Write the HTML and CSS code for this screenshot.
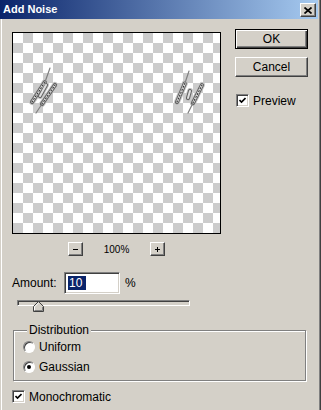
FILE: index.html
```html
<!DOCTYPE html>
<html lang="en">
<head>
    <meta charset="UTF-8">
    <title>Add Noise</title>
    <link rel="stylesheet" href="styles.css">
</head>
<body>
    <div class="window">
        <div class="titlebar">
            <span class="title">Add Noise</span>
            <span class="close">
                <svg width="8" height="7" viewBox="0 0 8 7"><path d="M0.5 0.5L7.5 6.5M7.5 0.5L0.5 6.5" stroke="#000" stroke-width="1.7"/></svg>
            </span>
        </div>
        <div class="content">
            <div class="top">
                <div class="preview-col">
                    <div class="preview">
                        <!-- noise specks left on the transparent layer -->
                        <svg width="207" height="200" viewBox="0 0 207 200">
                            <g fill="none" stroke-linecap="round">
                                <path d="M19 69L32 49M27 63L33 52M29 71L42 52M164 69L172 50M175 65L177 58M180 70L189 52" stroke="#c8c8c8" stroke-width="6"/>
                                <path d="M19 69L32 49M27 63L33 52M29 71L42 52M164 69L172 50M175 65L177 58M180 70L189 52" stroke="#666" stroke-width="4.2" stroke-dasharray="2.5 1"/>
                                <path d="M19 69L32 49M27 63L33 52M29 71L42 52M164 69L172 50M175 65L177 58M180 70L189 52" stroke="#e0e0e0" stroke-width="2"/>
                                <path d="M19 69L32 49M29 71L42 52M164 69L172 50M180 70L189 52" stroke="#333" stroke-width="1.1" stroke-dasharray="1 2.2"/>
                                <path d="M32 49L37 35M23 80L29 71M172 50L176 38M175 80L180 70" stroke="#808080" stroke-width="1.2"/>
                            </g>
                        </svg>
                    </div>
                    <div class="zoom-row">
                        <span class="small-btn"><svg width="5" height="5" viewBox="0 0 5 5"><path d="M0 2.5H5" stroke="#000"/></svg></span>
                        <span class="zoom-val">100%</span>
                        <span class="small-btn"><svg width="5" height="5" viewBox="0 0 5 5"><path d="M0 2.5H5M2.5 0V5" stroke="#000"/></svg></span>
                    </div>
                </div>
                <div class="side">
                    <div class="btn default">OK</div>
                    <div class="btn">Cancel</div>
                    <div class="check side-check">
                        <span class="box"><svg width="7" height="7" viewBox="0 0 7 7"><path d="M0.5 3L2.5 5L6.5 1" fill="none" stroke="#000" stroke-width="1.6"/></svg></span>
                        <span>Preview</span>
                    </div>
                </div>
            </div>

            <div class="amount">
                <span class="label">Amount:</span>
                <span class="field"><span class="sel">10</span></span>
                <span class="unit">%</span>
            </div>

            <div class="slider">
                <div class="track"></div>
                <svg class="thumb" width="11" height="11" viewBox="0 0 11 11">
                    <path d="M0.5 10.5V5.5L5.5 0.5L10.5 5.5V10.5Z" fill="#d4d0c8" stroke="#404040"/>
                    <path d="M1.5 9.5V5.9L5.5 1.9" fill="none" stroke="#fff"/>
                    <path d="M9.5 5.9V9.5H1.5" fill="none" stroke="#808080"/>
                </svg>
            </div>

            <div class="group">
                <div class="group-title">Distribution</div>
                <div class="radio-row"><span class="radio"></span>Uniform</div>
                <div class="radio-row"><span class="radio on"></span>Gaussian</div>
            </div>

            <div class="check mono">
                <span class="box"><svg width="7" height="7" viewBox="0 0 7 7"><path d="M0.5 3L2.5 5L6.5 1" fill="none" stroke="#000" stroke-width="1.6"/></svg></span>
                <span>Monochromatic</span>
            </div>
        </div>
    </div>
</body>
</html>
```

FILE: styles.css
```css
* {
    box-sizing: border-box;
}
body {
    margin: 0;
    width: 321px;
    height: 410px;
    overflow: hidden;
    background-color: #d4d0c8;
    font-family: "Liberation Sans", Arial, sans-serif;
    font-size: 12px;
    color: #000;
}
.window {
    height: 410px;
    padding-right: 2px;
    border-right: 1px solid #404040;
    box-shadow: inset -1px 0 #808080;
}
.titlebar {
    height: 19px;
    display: flex;
    justify-content: space-between;
    align-items: flex-start;
    padding: 0 2px 0 3px;
    background: linear-gradient(to right, #0a246a, #a6caf0);
}
.title {
    color: #fff;
    font-weight: bold;
    font-size: 11px;
    line-height: 18px;
}
.close {
    width: 16px;
    height: 14px;
    margin-top: 3px;
    display: flex;
    justify-content: center;
    align-items: center;
    background: #d4d0c8;
    border: 1px solid;
    border-color: #fff #404040 #404040 #fff;
    box-shadow: inset -1px -1px #808080;
}
.content {
    height: 391px;
    padding: 10px 0 0 11px;
    border-left: 1px solid #d4d0c8;
    box-shadow: inset 1px 0 #fff;
}
.top {
    display: flex;
    align-items: flex-start;
}
.preview-col {
    margin-top: 3px;
}
.preview {
    width: 209px;
    height: 202px;
    border: 1px solid #000;
    background: repeating-conic-gradient(#cccccc 0 25%, #fff 0 50%) 0 0 / 20px 20px;
}
.preview svg {
    display: block;
}
.zoom-row {
    margin-top: 8px;
    display: flex;
    justify-content: center;
    align-items: center;
}
.small-btn {
    width: 15px;
    height: 14px;
    display: flex;
    justify-content: center;
    align-items: center;
    border: 1px solid;
    border-color: #fff #404040 #404040 #fff;
    box-shadow: inset -1px -1px #808080;
}
.zoom-val {
    width: 67px;
    text-align: center;
    font-size: 10px;
}
.side {
    margin-left: 14px;
    display: flex;
    flex-direction: column;
}
.btn {
    width: 73px;
    height: 20px;
    display: flex;
    justify-content: center;
    align-items: center;
    border: 1px solid;
    border-color: #fff #404040 #404040 #fff;
    box-shadow: inset -1px -1px #808080;
    margin-bottom: 8px;
}
.btn.default {
    border-color: #000;
    box-shadow: inset 1px 1px #fff, inset -1px -1px #404040, inset -2px -2px #808080;
}
.check {
    display: flex;
    align-items: center;
    gap: 4px;
    height: 13px;
}
.side-check {
    margin: 9px 0 0 1px;
}
.box {
    width: 13px;
    height: 13px;
    display: flex;
    justify-content: center;
    align-items: center;
    flex-shrink: 0;
    background: #fff;
    border: 1px solid;
    border-color: #808080 #fff #fff #808080;
    box-shadow: inset 1px 1px #404040, inset -1px -1px #d4d0c8;
}
.amount {
    margin-top: 16px;
    display: flex;
    align-items: center;
}
.label {
    width: 52px;
}
.field {
    width: 56px;
    height: 22px;
    padding: 3px 0 0 3px;
    background: #fff;
    border: 1px solid;
    border-color: #808080 #fff #fff #808080;
    box-shadow: inset 1px 1px #404040, inset -1px -1px #d4d0c8;
}
.sel {
    display: inline-block;
    width: 18px;
    height: 14px;
    line-height: 14px;
    padding-left: 1px;
    background: #0a246a;
    color: #fff;
}
.unit {
    margin-left: 5px;
}
.slider {
    position: relative;
    width: 173px;
    height: 12px;
    margin: 3px 0 0 5px;
}
.track {
    margin-top: 6px;
    height: 6px;
    border: 1px solid;
    border-color: #808080 #fff #fff #808080;
    box-shadow: inset 1px 1px #404040;
}
.thumb {
    position: absolute;
    left: 16px;
    top: 1px;
}
.group {
    width: 293px;
    margin: 18px 0 0 1px;
    padding: 0 0 3px 9px;
    border: 1px solid #808080;
    box-shadow: 1px 1px #fff, inset 1px 1px #fff;
}
.group-title {
    display: table;
    margin: -8px 0 0 4px;
    padding: 0 2px;
    line-height: 14px;
    background: #d4d0c8;
}
.radio-row {
    height: 20px;
    display: flex;
    align-items: center;
    gap: 4px;
}
.radio {
    width: 12px;
    height: 12px;
    border-radius: 50%;
    display: flex;
    justify-content: center;
    align-items: center;
    background: #fff;
    border: 1px solid;
    border-color: #808080 #fff #fff #808080;
    box-shadow: inset 1px 1px #404040;
}
.radio.on::after {
    content: "";
    width: 4px;
    height: 4px;
    border-radius: 50%;
    background: #000;
}
.mono {
    margin-top: 9px;
}
```
